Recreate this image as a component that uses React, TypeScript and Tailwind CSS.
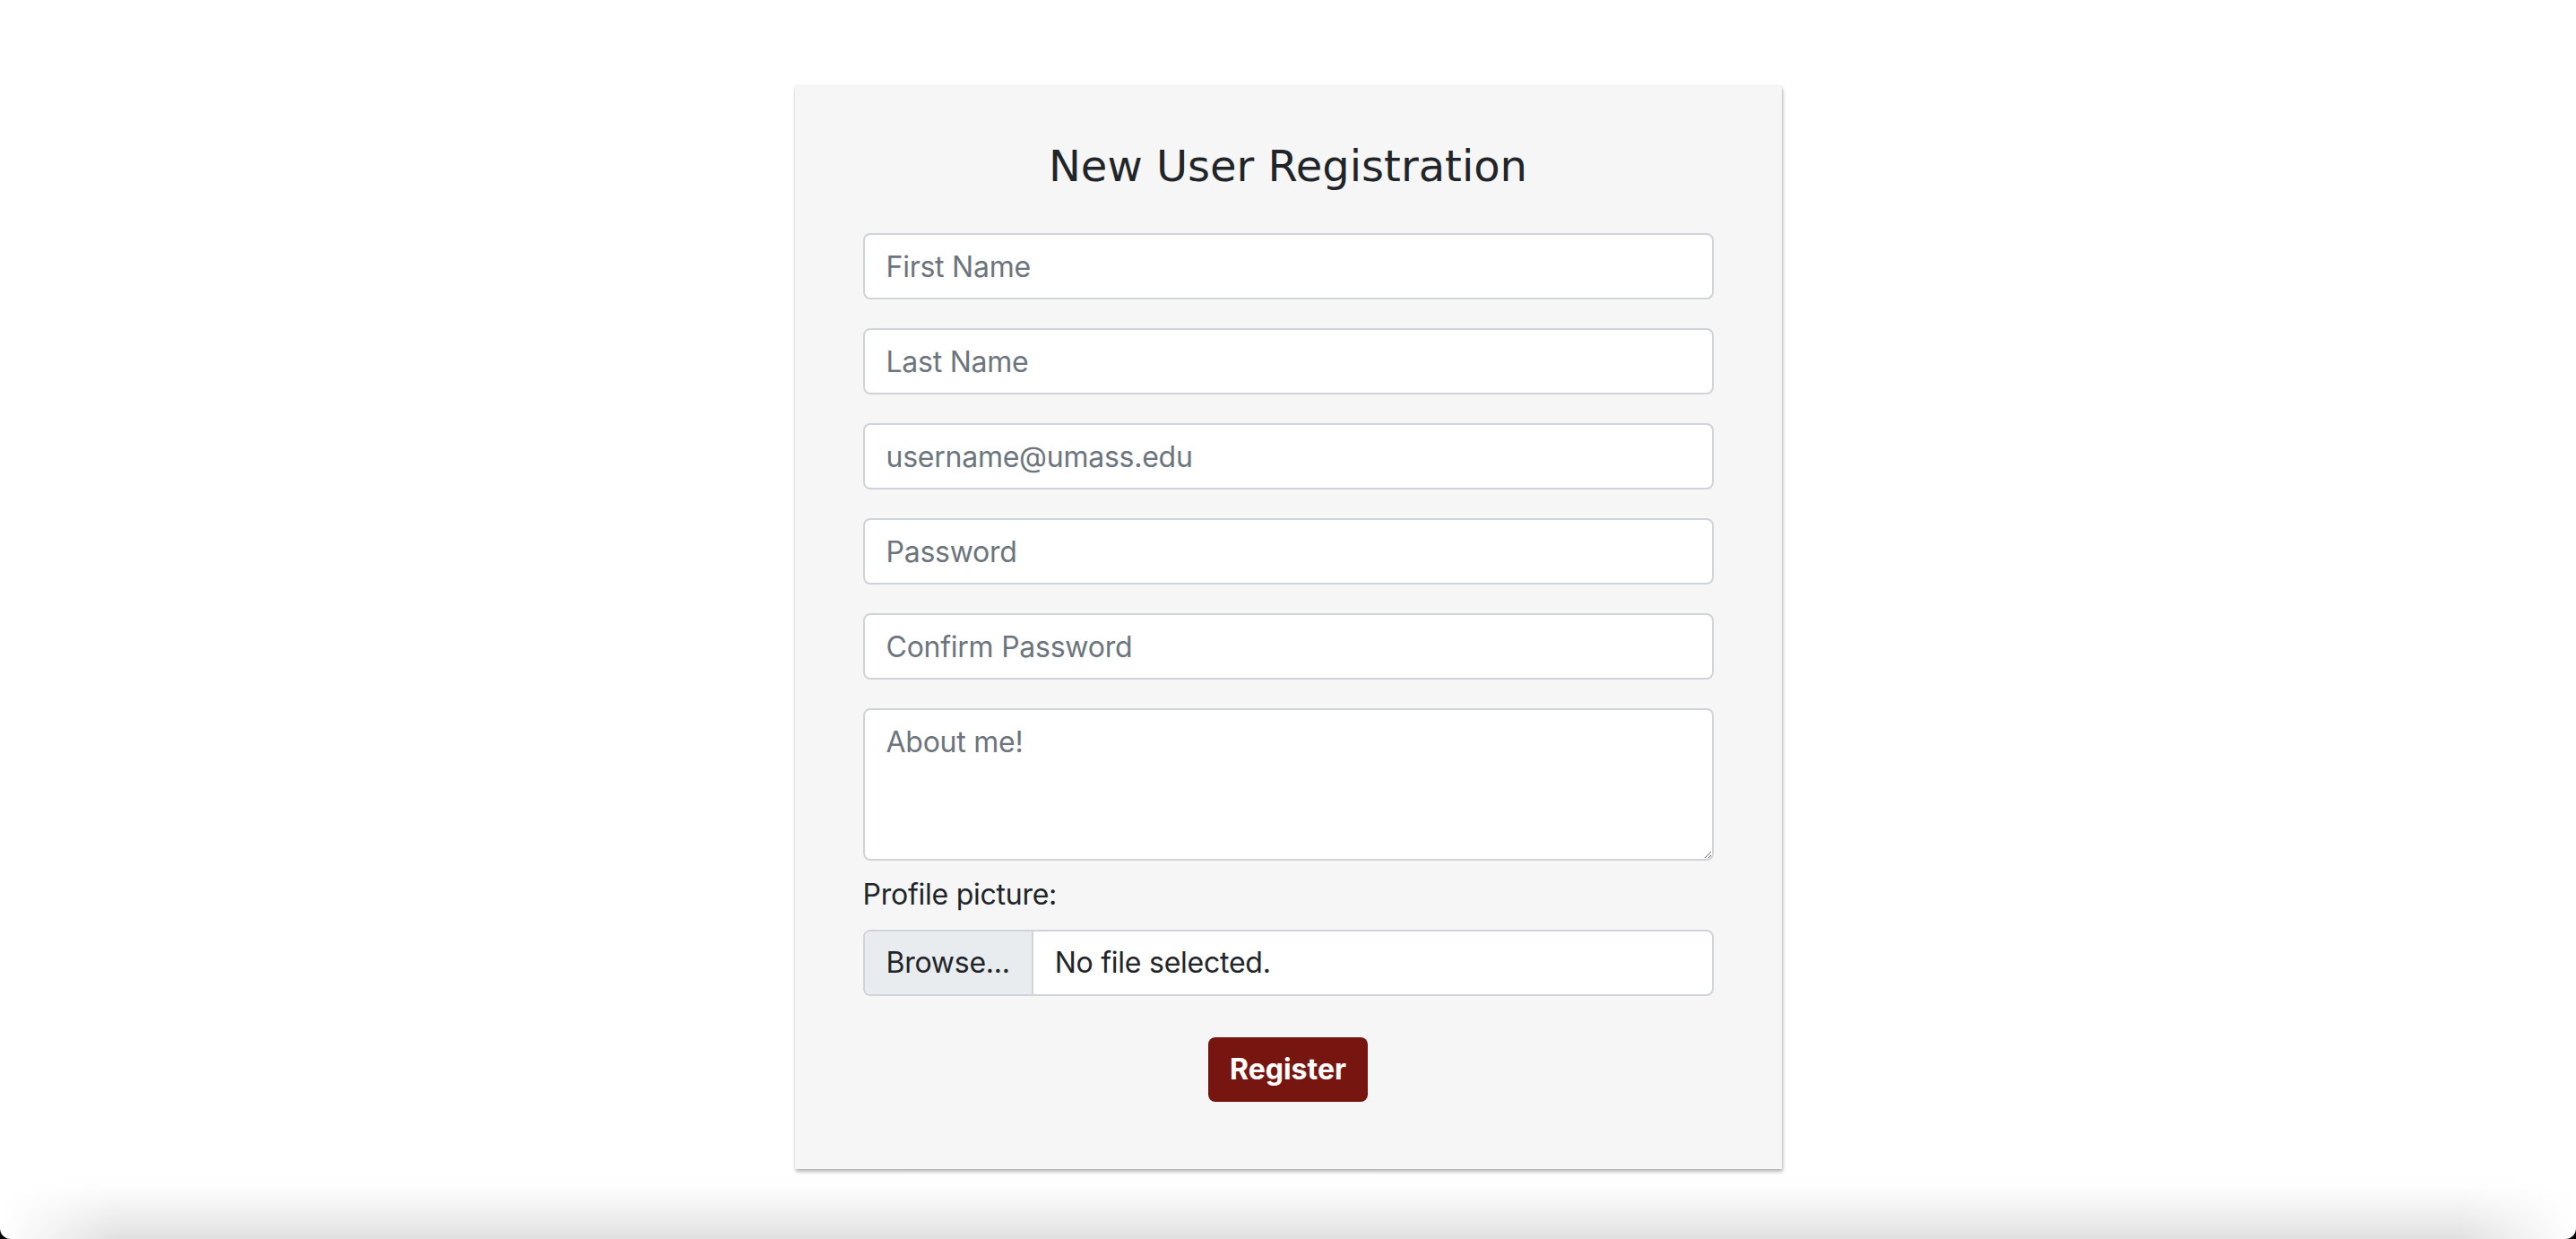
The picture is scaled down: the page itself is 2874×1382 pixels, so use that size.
const inputClass =
  "block w-full h-[74px] rounded-[8px] border-2 border-[#ced4da] bg-white px-[24px] py-[12px] text-[32px] leading-[48px] tracking-[-0.25px] text-[#495057] placeholder:text-[#6c757d] outline-none";

const fields = [
  { type: "text", placeholder: "First Name" },
  { type: "text", placeholder: "Last Name" },
  { type: "email", placeholder: "username@umass.edu" },
  { type: "password", placeholder: "Password" },
  { type: "password", placeholder: "Confirm Password" },
];

function FileField() {
  return (
    <div className="flex h-[74px] w-full overflow-hidden rounded-[8px] border-2 border-[#ced4da] bg-white text-[32px] leading-[48px] tracking-[-0.25px] text-[#212529]">
      <div className="flex items-center border-r-2 border-[#ced4da] bg-[#e9ecef] px-[24px]">
        Browse...
      </div>
      <div className="flex items-center px-[24px]">No file selected.</div>
    </div>
  );
}

export default function App() {
  return (
    <div className="flex h-[1382px] flex-col bg-black font-['Inter',sans-serif]">
      <div className="flex-1 bg-white pt-[96px]">
        <div className="mx-auto w-[1101px] bg-[#f6f6f6] px-[76px] pt-[60px] pb-[75px] shadow-[1px_3px_4px_rgba(0,0,0,0.28),0_0_2px_rgba(0,0,0,0.12)]">
          <h3 className="mb-[46px] text-center font-['DejaVu_Sans',sans-serif] text-[48px] leading-[58px] font-normal text-[#212529]">
            New User Registration
          </h3>
          <form className="flex flex-col" onSubmit={(e) => e.preventDefault()}>
            <div className="flex flex-col gap-[32px]">
              {fields.map((f) => (
                <input
                  key={f.placeholder}
                  type={f.type}
                  placeholder={f.placeholder}
                  className={inputClass}
                />
              ))}
              <textarea
                placeholder="About me!"
                className="block h-[170px] w-full rounded-[8px] border-2 border-[#ced4da] bg-white px-[24px] py-[12px] text-[32px] leading-[48px] tracking-[-0.25px] text-[#495057] placeholder:text-[#6c757d] outline-none"
              />
            </div>
            <label className="mt-[14px] mb-[15px] block text-[32px] leading-[48px] tracking-[-0.25px] text-[#212529]">
              Profile picture:
            </label>
            <FileField />
            <div className="mt-[46px] flex justify-center">
              <button
                type="submit"
                className="h-[72px] rounded-[8px] bg-[#771510] px-[24px] text-[32px] leading-[48px] font-bold text-white"
              >
                Register
              </button>
            </div>
          </form>
        </div>
      </div>
      <div className="h-[72px] rounded-b-[12px] bg-[linear-gradient(to_right,rgba(255,255,255,1),rgba(255,255,255,0)_130px,rgba(255,255,255,0)_calc(100%-130px),rgba(255,255,255,1)),linear-gradient(to_bottom,#ffffff,#fdfdfd_20%,#e1e1e1)]" />
    </div>
  );
}
